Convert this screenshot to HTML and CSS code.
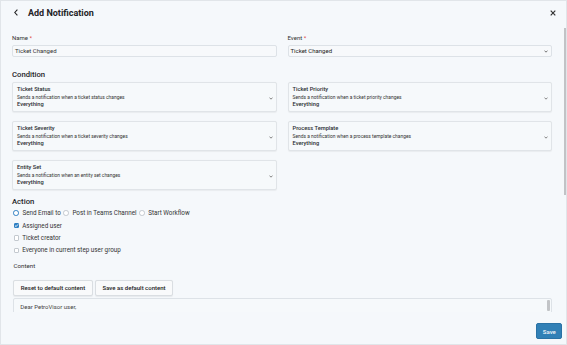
FILE: index.html
```html
<!DOCTYPE html>
<html>
<head>
<meta charset="utf-8">
<link rel="stylesheet" href="styles.css">
</head>
<body>
<div class="dialog">
  <header class="header">
    <span class="back"><svg width="4" height="7" viewBox="0 0 4 7"><polyline points="3.4,0.6 0.8,3.5 3.4,6.4" fill="none" stroke="#222" stroke-width="1.1"/></svg></span>
    <h1 class="title">Add Notification</h1>
    <span class="close"><svg width="6" height="6" viewBox="0 0 6 6"><path d="M0.7 0.7L5.3 5.3M5.3 0.7L0.7 5.3" stroke="#333" stroke-width="1.2"/></svg></span>
  </header>
  <main class="body">
    <div class="fields">
      <div class="field">
        <div class="label">Name <span class="req">*</span></div>
        <div class="input">Ticket Changed</div>
      </div>
      <div class="field">
        <div class="label">Event <span class="req">*</span></div>
        <div class="input select">Ticket Changed<svg class="chev" width="4" height="3" viewBox="0 0 4 3"><polyline points="0.5,0.6 2,2.2 3.5,0.6" fill="none" stroke="#666" stroke-width="0.9"/></svg></div>
      </div>
    </div>
    <h2 class="section">Condition</h2>
    <div class="cards">
      <div class="card">
        <div class="card-title">Ticket Status</div>
        <div class="card-desc">Sends a notification when a ticket status changes</div>
        <div class="card-value">Everything</div>
        <svg class="chev" width="4" height="3" viewBox="0 0 4 3"><polyline points="0.5,0.6 2,2.2 3.5,0.6" fill="none" stroke="#777" stroke-width="0.9"/></svg>
      </div>
      <div class="card">
        <div class="card-title">Ticket Priority</div>
        <div class="card-desc">Sends a notification when a ticket priority changes</div>
        <div class="card-value">Everything</div>
        <svg class="chev" width="4" height="3" viewBox="0 0 4 3"><polyline points="0.5,0.6 2,2.2 3.5,0.6" fill="none" stroke="#777" stroke-width="0.9"/></svg>
      </div>
      <div class="card">
        <div class="card-title">Ticket Severity</div>
        <div class="card-desc">Sends a notification when a ticket severity changes</div>
        <div class="card-value">Everything</div>
        <svg class="chev" width="4" height="3" viewBox="0 0 4 3"><polyline points="0.5,0.6 2,2.2 3.5,0.6" fill="none" stroke="#777" stroke-width="0.9"/></svg>
      </div>
      <div class="card">
        <div class="card-title">Process Template</div>
        <div class="card-desc">Sends a notification when a process template changes</div>
        <div class="card-value">Everything</div>
        <svg class="chev" width="4" height="3" viewBox="0 0 4 3"><polyline points="0.5,0.6 2,2.2 3.5,0.6" fill="none" stroke="#777" stroke-width="0.9"/></svg>
      </div>
      <div class="card">
        <div class="card-title">Entity Set</div>
        <div class="card-desc">Sends a notification when an entity set changes</div>
        <div class="card-value">Everything</div>
        <svg class="chev" width="4" height="3" viewBox="0 0 4 3"><polyline points="0.5,0.6 2,2.2 3.5,0.6" fill="none" stroke="#777" stroke-width="0.9"/></svg>
      </div>
    </div>
    <h2 class="section action">Action</h2>
    <div class="option-row">
      <span class="radio checked"></span><span class="opt">Send Email to</span>
      <span class="radio"></span><span class="opt">Post in Teams Channel</span>
      <span class="radio"></span><span class="opt">Start Workflow</span>
    </div>
    <div class="option-row">
      <span class="check checked"><svg width="5" height="5" viewBox="0 0 5 5"><polyline points="1,2.6 2.1,3.6 4,1.4" fill="none" stroke="#fff" stroke-width="0.9"/></svg></span><span class="opt">Assigned user</span>
    </div>
    <div class="option-row">
      <span class="check"></span><span class="opt">Ticket creator</span>
    </div>
    <div class="option-row">
      <span class="check"></span><span class="opt">Everyone in current step user group</span>
    </div>
    <div class="content-label">Content</div>
    <div class="buttons">
      <button class="btn">Reset to default content</button>
      <button class="btn">Save as default content</button>
    </div>
    <div class="textarea">Dear PetroVisor user,<span class="ta-thumb"></span></div>
  </main>
  <footer class="footer">
    <button class="save">Save</button>
  </footer>
  <span class="scroll-thumb"></span>
</div>
</body>
</html>
```
FILE: styles.css
```css
html, body {
  margin: 0;
  padding: 0;
}
body {
  font-family: Roboto, "Liberation Sans", sans-serif;
  background: #f5f8fb;
}
.dialog {
  position: relative;
  width: 567px;
  height: 345px;
  box-sizing: border-box;
  border: 1px solid #e1e5e9;
  background: #f5f8fb;
  display: flex;
  flex-direction: column;
  color: #212529;
  overflow: hidden;
}
.header {
  height: 23px;
  flex: none;
  display: flex;
  align-items: center;
  padding: 0 10px 0 13px;
}
.back {
  display: flex;
  width: 4px;
}
.title {
  margin: 0 0 0 10px;
  font-size: 9px;
  font-weight: 700;
  line-height: 12px;
  color: #1f2327;
}
.close {
  margin-left: auto;
  display: flex;
}
.body {
  flex: none;
  height: 288px;
  box-sizing: border-box;
  padding: 10px 14px 0 11px;
  overflow: hidden;
}
.fields {
  display: grid;
  grid-template-columns: 1fr 1fr;
  column-gap: 11px;
}
.label {
  font-size: 6px;
  line-height: 8px;
  color: #333;
  margin-bottom: 3px;
}
.req {
  color: #e0463c;
}
.input {
  position: relative;
  height: 12px;
  box-sizing: border-box;
  border: 1px solid #dde2e7;
  border-radius: 2px;
  background: #f7f9fb;
  padding: 0 2px;
  font-size: 6px;
  line-height: 10px;
  color: #333;
}
.input.select {
  color: #222;
}
.input .chev {
  position: absolute;
  right: 3px;
  top: 4px;
}
.section {
  margin: 13px 0 2px 0;
  font-size: 7.7px;
  font-weight: 500;
  line-height: 10px;
  color: #1f2327;
}
.section.action {
  margin-top: 7px;
  margin-bottom: 0;
}
.cards {
  display: grid;
  grid-template-columns: 1fr 1fr;
  column-gap: 11px;
  row-gap: 9px;
}
.card {
  position: relative;
  height: 30px;
  box-sizing: border-box;
  border: 1px solid #e0e4e8;
  border-radius: 2px;
  background: #f6f9fb;
  box-shadow: 0 0.5px 1px rgba(0,0,0,0.05);
  padding: 3px 4px;
}
.card-title {
  font-size: 5.7px;
  font-weight: 500;
  line-height: 7px;
  color: #2a2d31;
}
.card-desc {
  font-size: 4.9px;
  line-height: 8px;
  color: #333;
}
.card-value {
  font-size: 5.7px;
  font-weight: 500;
  line-height: 7px;
  color: #2a2d31;
}
.card .chev {
  position: absolute;
  right: 3px;
  top: 13.5px;
}
.option-row {
  height: 12.4px;
  display: flex;
  align-items: center;
  font-size: 6.3px;
  color: #333;
}
.opt {
  margin-left: 3.5px;
  margin-right: 2.5px;
  line-height: 8px;
}
.radio {
  width: 5.6px;
  height: 5.6px;
  box-sizing: border-box;
  border-radius: 50%;
  border: 0.8px solid #c3c9cf;
  background: #fff;
  margin-left: 1.3px;
  flex: none;
}
.radio + .opt + .radio {
  margin-left: 0;
}
.radio.checked {
  border: 1.9px solid #2f80c3;
  background: #fff;
}
.check {
  width: 5.2px;
  height: 5.2px;
  box-sizing: border-box;
  border-radius: 1px;
  border: 0.8px solid #c3c9cf;
  background: #fff;
  margin-left: 1.5px;
  flex: none;
  display: flex;
  align-items: center;
  justify-content: center;
}
.check.checked {
  background: #2f80c3;
  border-color: #2f80c3;
}
.check svg {
  flex: none;
}
.content-label {
  margin-top: 5.4px;
  margin-left: 1.5px;
  font-size: 6.2px;
  line-height: 8px;
  color: #333;
}
.buttons {
  margin-top: 10px;
  margin-left: 1.3px;
  display: flex;
  gap: 2.4px;
}
.btn {
  height: 16px;
  box-sizing: border-box;
  border: 1px solid #dadee2;
  border-radius: 2px;
  background: #f9fafb;
  box-shadow: 0 0.5px 1px rgba(0,0,0,0.06);
  padding: 0 6.5px;
  font-family: inherit;
  font-size: 6px;
  font-weight: 500;
  color: #222;
}
.textarea {
  position: relative;
  margin-top: 2px;
  margin-left: 1.3px;
  height: 60px;
  box-sizing: border-box;
  border: 1px solid #dde2e7;
  border-radius: 2px;
  background: #f6f9fb;
  padding: 4px 6px;
  font-size: 6px;
  line-height: 8px;
  color: #444;
}
.ta-thumb {
  position: absolute;
  right: 1px;
  top: 1px;
  width: 2.6px;
  height: 11px;
  border-radius: 1px;
  background: #c2c4c7;
}
.footer {
  flex: none;
  height: 32px;
  box-sizing: border-box;
  display: flex;
  justify-content: flex-end;
  align-items: flex-start;
  padding: 11px 3.7px 0 0;
}
.save {
  width: 26px;
  height: 16px;
  box-sizing: border-box;
  border: 1px solid #2a72a5;
  border-radius: 2px;
  background: #3180b6;
  color: #f2f6fa;
  font-family: inherit;
  font-size: 6px;
  font-weight: 500;
  padding: 0;
}
.scroll-thumb {
  position: absolute;
  right: 0;
  top: 27px;
  width: 2.5px;
  height: 167px;
  background: #c1c3c6;
}
```
